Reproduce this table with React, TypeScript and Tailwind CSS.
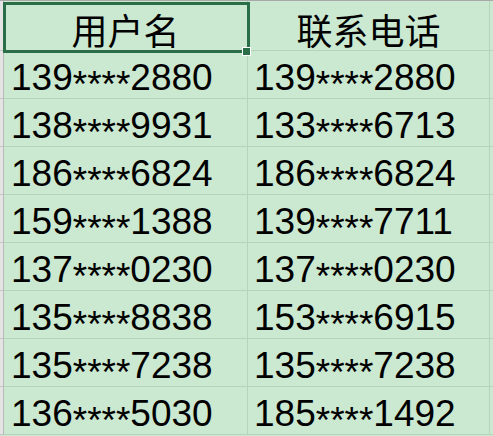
import React from "react";

const rows: [string, string, string, string][] = [
  ["139", "2880", "139", "2880"],
  ["138", "9931", "133", "6713"],
  ["186", "6824", "186", "6824"],
  ["159", "1388", "139", "7711"],
  ["137", "0230", "137", "0230"],
  ["135", "8838", "153", "6915"],
  ["135", "7238", "135", "7238"],
  ["136", "5030", "185", "1492"],
];

function Phone({ a, b }: { a: string; b: string }) {
  return (
    <span>
      {a}
      <span className="relative top-[7px] inline-block h-[16px] leading-[16px]">****</span>
      {b}
    </span>
  );
}

export default function App() {
  const font = { fontFamily: '"Liberation Sans", Arial, sans-serif' };
  const cjk = { fontFamily: '"Noto Sans CJK SC", sans-serif' };
  return (
    <div className="relative w-[493px] h-[436px] overflow-hidden bg-[#cbe8d0] flex flex-col border-t border-[#a9a9a9]">
      {/* header row */}
      <div className="flex h-[50px] shrink-0">
        <div className="w-[4px] bg-[#e4e4e4] border-r border-[#b9b9b9] border-b border-b-[#c4c4c4]" />
        <div
          className="w-[244px] flex items-center justify-center pt-[6px] border-r border-b border-[#b6d3bc] text-[36px] leading-none text-black"
          style={cjk}
        >
          用户名
        </div>
        <div
          className="w-[242px] flex items-center justify-center pt-[6px] border-r border-b border-[#b6d3bc] text-[36px] leading-none text-black"
          style={cjk}
        >
          联系电话
        </div>
        <div className="flex-1 border-b border-[#b6d3bc]" />
      </div>
      {rows.map((r, i) => (
        <div key={i} className="flex h-[48px] shrink-0">
          <div className="w-[4px] bg-[#e4e4e4] border-r border-[#b9b9b9] border-b border-b-[#c4c4c4]" />
          <div
            className="w-[244px] flex items-center pl-[7px] pt-[5px] border-r border-b border-[#b6d3bc] text-[37px] leading-none text-black"
            style={font}
          >
            <Phone a={r[0]} b={r[1]} />
          </div>
          <div
            className="w-[242px] flex items-center pl-[6px] pt-[5px] border-r border-b border-[#b6d3bc] text-[37px] leading-none text-black"
            style={font}
          >
            <Phone a={r[2]} b={r[3]} />
          </div>
          <div className="flex-1 border-b border-[#b6d3bc]" />
        </div>
      ))}
      {/* selection box */}
      <div className="absolute left-[3px] top-[1px] w-[247px] h-[51px] border-[3px] border-[#2a6e47]" />
      <div className="absolute left-[242px] top-[46px] w-[9px] h-[9px] bg-[#2a6e47] border border-white" />
    </div>
  );
}
